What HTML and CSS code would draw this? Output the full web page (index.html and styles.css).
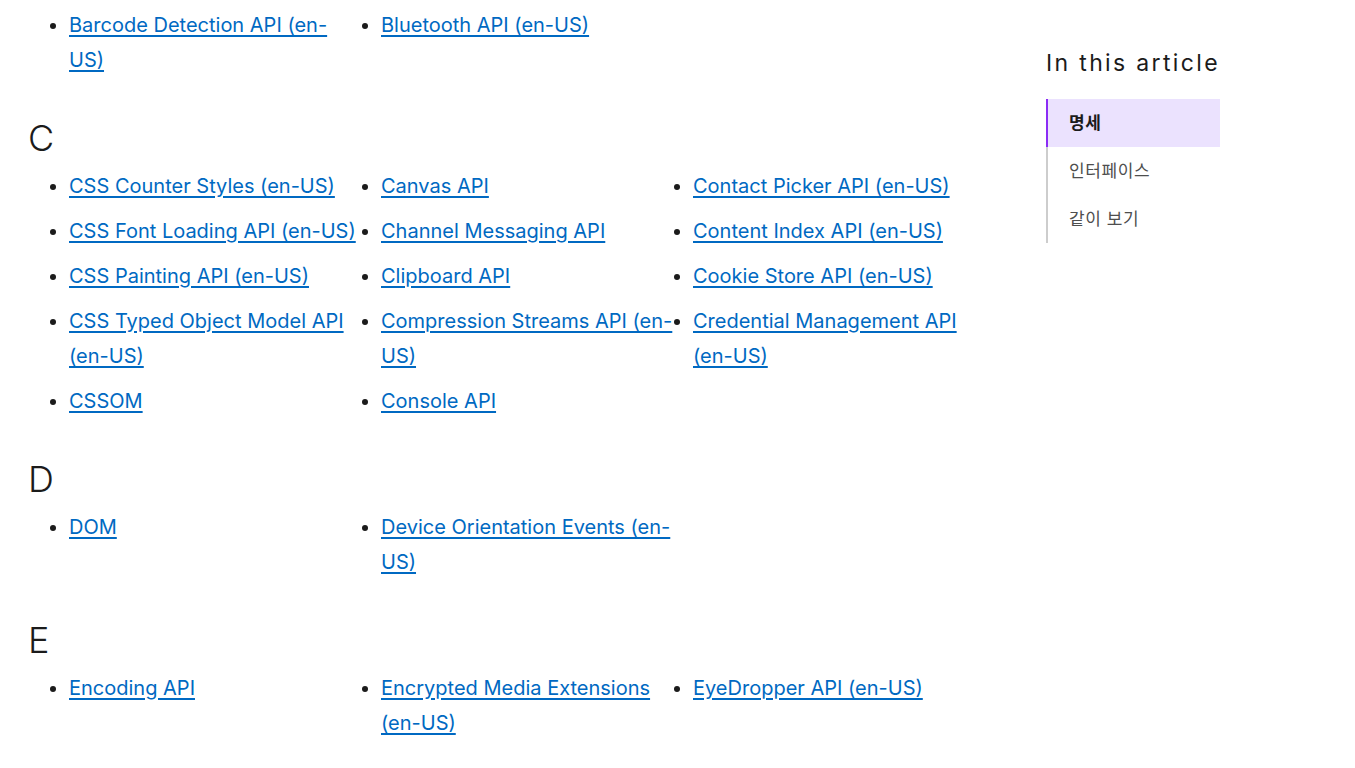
FILE: index.html
```html
<!DOCTYPE html>
<html lang="ko">
<head>
<meta charset="utf-8">
<title>Web API</title>
<link rel="stylesheet" href="styles.css">
</head>
<body>
<div class="page">
  <main class="content">
    <ul class="index-list">
      <li><a href="#">Barcode Detection API (en-US)</a></li>
      <li><a href="#">Bluetooth API (en-US)</a></li>
    </ul>

    <h2 class="letter">C</h2>
    <ul class="index-list">
      <li><a href="#">CSS Counter Styles (en-US)</a></li>
      <li><a href="#">CSS Font Loading API (en-US)</a></li>
      <li><a href="#">CSS Painting API (en-US)</a></li>
      <li><a href="#">CSS Typed Object Model API (en-US)</a></li>
      <li><a href="#">CSSOM</a></li>
      <li><a href="#">Canvas API</a></li>
      <li><a href="#">Channel Messaging API</a></li>
      <li><a href="#">Clipboard API</a></li>
      <li><a href="#">Compression Streams API (en-US)</a></li>
      <li><a href="#">Console API</a></li>
      <li><a href="#">Contact Picker API (en-US)</a></li>
      <li><a href="#">Content Index API (en-US)</a></li>
      <li><a href="#">Cookie Store API (en-US)</a></li>
      <li><a href="#">Credential Management API (en-US)</a></li>
    </ul>

    <h2 class="letter">D</h2>
    <ul class="index-list">
      <li><a href="#">DOM</a></li>
      <li><a href="#">Device Orientation Events (en-US)</a></li>
    </ul>

    <h2 class="letter">E</h2>
    <ul class="index-list">
      <li><a href="#">Encoding API</a></li>
      <li><a href="#">Encrypted Media Extensions (en-US)</a></li>
      <li><a href="#">EyeDropper API (en-US)</a></li>
    </ul>
  </main>

  <aside class="toc">
    <h2 class="toc-title">In this article</h2>
    <ul class="toc-list">
      <li class="toc-item is-active"><a href="#">명세</a></li>
      <li class="toc-item"><a href="#">인터페이스</a></li>
      <li class="toc-item"><a href="#">같이 보기</a></li>
    </ul>
  </aside>
</div>
</body>
</html>
```

FILE: styles.css
```css
html, body {
  margin: 0;
  padding: 0;
  background: #ffffff;
}

body {
  font-family: Inter, "Noto Sans CJK KR", "Noto Sans", sans-serif;
  color: #1b1b1b;
  font-size: 20px;
  line-height: 1.75;
}

.page {
  display: flex;
  align-items: flex-start;
  padding-left: 28px;
}

.content {
  width: 953px;
  padding-top: 7.5px;
}

.index-list {
  margin: 0;
  padding: 0 0 0 41px;
  columns: 3;
  column-gap: 20.5px;
  width: 915.5px;
}

.index-list li {
  margin: 0 0 10px;
  break-inside: avoid;
}

.index-list li::marker {
  color: #1b1b1b;
}

.index-list a {
  color: #0069c2;
  text-decoration: underline;
  text-underline-offset: 3px;
  text-decoration-thickness: 1.5px;
}

.letter {
  margin: 39px 0 9px;
  font-size: 36px;
  font-weight: 300;
  line-height: 43px;
  letter-spacing: 0;
}

.toc {
  margin-left: 65px;
  width: 174px;
  padding-top: 44px;
}

.toc-title {
  margin: 0 0 17px;
  font-size: 23px;
  font-weight: 400;
  line-height: 38px;
  letter-spacing: 2.35px;
  color: #1b1b1b;
  white-space: nowrap;
}

.toc-list {
  list-style: none;
  margin: 0;
  padding: 0;
  border-left: 2px solid #cdcdcd;
}

.toc-item a {
  display: block;
  height: 48px;
  line-height: 48px;
  padding-left: 21px;
  font-size: 17px;
  letter-spacing: 0.6px;
  color: #4e4e4e;
  text-decoration: none;
}

.toc-item.is-active {
  margin-left: -2px;
  border-left: 2px solid #8b2cf5;
  background: #ebe2fe;
}

.toc-item.is-active a {
  color: #1b1b1b;
  font-weight: 600;
}
```
